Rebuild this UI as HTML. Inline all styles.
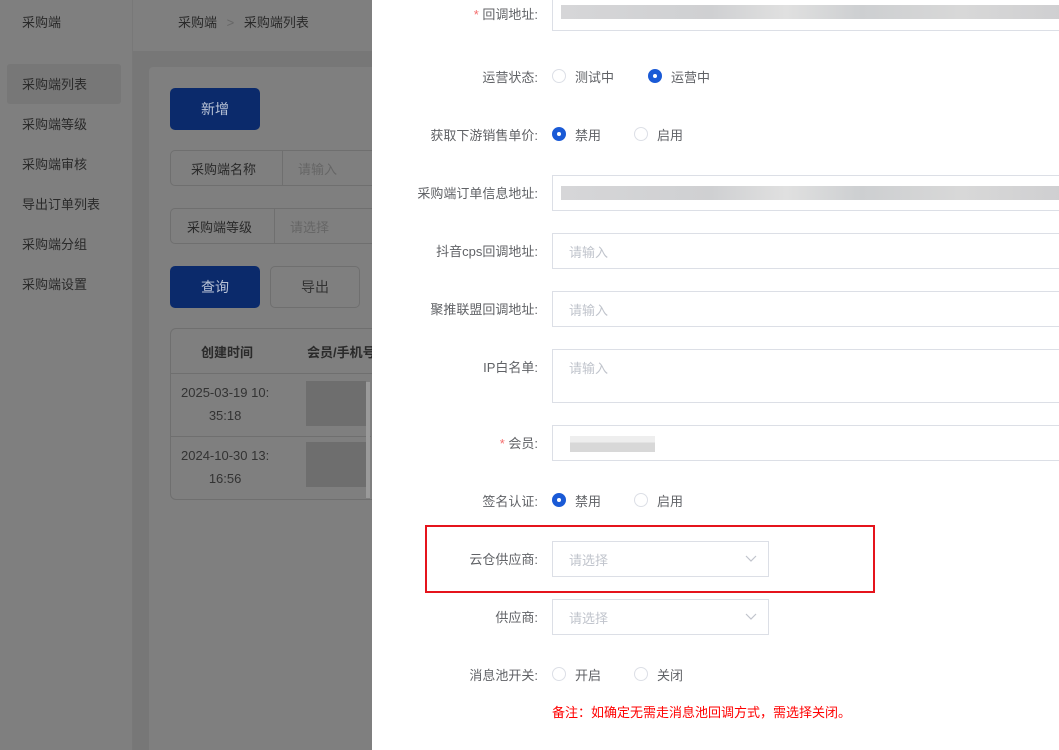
<!DOCTYPE html>
<html><head><meta charset="utf-8"><style>
*{box-sizing:border-box;margin:0;padding:0}
body{width:1059px;height:750px;overflow:hidden;position:relative;font-family:"Liberation Sans","Noto Sans CJK SC",sans-serif;font-size:13px;background:#fff}
.abs{position:absolute}
#left{left:0;top:0;width:372px;height:750px;background:#777;overflow:hidden}
.side{left:0;top:0;width:133px;height:750px;background:#7f7f7f;border-right:1px solid #787878}
.hdr{left:133px;top:0;width:239px;height:52px;background:#7f7f7f;border-bottom:1px solid #777}
.gt{color:#2a2a2a;white-space:nowrap}
.card{left:149px;top:67px;width:240px;height:700px;background:#7f7f7f;border-radius:4px}
.btn{border-radius:5px;text-align:center;line-height:42px;font-size:14px}
.lab{right:521px;text-align:right;color:#606266;font-size:13px;white-space:nowrap}
.inp{left:552px;border:1px solid #dcdfe6;background:#fff;height:36px;width:520px}
.ph{color:#c0c4cc;position:absolute;left:16px;top:8px}
.radio{width:14px;height:14px;border-radius:50%;border:1px solid #dcdfe6;display:inline-block;position:absolute}
.on{background:#1a5ad6;border-color:#1a5ad6}
.on::after{content:"";position:absolute;left:4px;top:4px;width:4px;height:4px;background:#fff;border-radius:50%}
.rt{position:absolute;color:#606266}
.star{color:#f56c6c}
.blur{position:absolute;background:linear-gradient(90deg,#d6d6d8,#cfd0d2 30%,#e0e0e0 45%,#cdcfd1 60%,#d8d8d8 80%,#cfcfd1);}
</style></head><body>
<div id="left" class="abs">
 <div class="abs side"></div>
 <div class="abs hdr"></div>
 <div class="abs gt" style="left:22px;top:12px">采购端</div>
 <div class="abs gt" style="left:178px;top:12px">采购端 <span style="color:#666;margin:0 6px">&gt;</span> 采购端列表</div>
 <div class="abs" style="left:7px;top:64px;width:114px;height:40px;background:#777;border-radius:3px"></div>
 <div class="abs gt" style="left:22px;top:65px;line-height:40px">采购端列表<br>采购端等级<br>采购端审核<br>导出订单列表<br>采购端分组<br>采购端设置</div>
 <div class="abs card"></div>
 <div class="abs btn" style="left:170px;top:88px;width:90px;background:#0b2a6b;color:#b9c3d6">新增</div>
 <div class="abs" style="left:170px;top:150px;width:220px;height:36px;border:1px solid #6f6f6f;border-radius:5px"><div class="abs" style="left:111px;top:0;height:34px;border-left:1px solid #6f6f6f"></div><span class="abs gt" style="left:20px;top:8px">采购端名称</span><span class="abs" style="left:127px;top:8px;color:#666">请输入</span></div>
 <div class="abs" style="left:170px;top:208px;width:220px;height:36px;border:1px solid #6f6f6f;border-radius:5px"><div class="abs" style="left:103px;top:0;height:34px;border-left:1px solid #6f6f6f"></div><span class="abs gt" style="left:16px;top:8px">采购端等级</span><span class="abs" style="left:119px;top:8px;color:#666">请选择</span></div>
 <div class="abs btn" style="left:170px;top:266px;width:90px;background:#0b2a6b;color:#b9c3d6">查询</div>
 <div class="abs btn" style="left:270px;top:266px;width:90px;border:1px solid #6f6f6f;color:#333;line-height:40px">导出</div>
 <div class="abs" style="left:170px;top:328px;width:220px;height:172px;border:1px solid #6f6f6f;border-radius:6px"></div>
 <div class="abs" style="left:171px;top:373px;width:210px;border-top:1px solid #6f6f6f"></div>
 <div class="abs" style="left:171px;top:436px;width:200px;border-top:1px solid #6f6f6f"></div>
 <div class="abs gt" style="left:201px;top:342px;font-weight:bold">创建时间</div>
 <div class="abs gt" style="left:307px;top:342px;font-weight:bold">会员/手机号</div>
 <div class="abs" style="left:181px;top:381px;color:#333;text-align:center;line-height:23px">2025-03-19 10:<br>35:18</div>
 <div class="abs" style="left:181px;top:444px;color:#333;text-align:center;line-height:23px">2024-10-30 13:<br>16:56</div>
 <div class="abs" style="left:306px;top:381px;width:60px;height:45px;background:#6e6e6e"></div>
 <div class="abs" style="left:306px;top:442px;width:60px;height:45px;background:#6e6e6e"></div>
 <div class="abs" style="left:366px;top:382px;width:4px;height:116px;background:#9a9a9a"></div>
</div>

<div class="abs lab" style="top:4px"><span class="star">* </span>回调地址:</div>
<div class="abs inp" style="top:-6px;height:37px"><div class="blur" style="left:8px;top:10px;width:500px;height:14px"></div></div>

<div class="abs lab" style="top:67px">运营状态:</div>
<span class="radio" style="left:552px;top:69px"></span><span class="rt" style="left:575px;top:67px">测试中</span>
<span class="radio on" style="left:648px;top:69px"></span><span class="rt" style="left:671px;top:67px">运营中</span>

<div class="abs lab" style="top:125px">获取下游销售单价:</div>
<span class="radio on" style="left:552px;top:127px"></span><span class="rt" style="left:575px;top:125px">禁用</span>
<span class="radio" style="left:634px;top:127px"></span><span class="rt" style="left:657px;top:125px">启用</span>

<div class="abs lab" style="top:183px">采购端订单信息地址:</div>
<div class="abs inp" style="top:175px"><div class="blur" style="left:8px;top:10px;width:500px;height:14px"></div></div>

<div class="abs lab" style="top:241px">抖音cps回调地址:</div>
<div class="abs inp" style="top:233px"><span class="ph">请输入</span></div>
<div class="abs lab" style="top:299px">聚推联盟回调地址:</div>
<div class="abs inp" style="top:291px"><span class="ph">请输入</span></div>
<div class="abs lab" style="top:357px">IP白名单:</div>
<div class="abs inp" style="top:349px;height:54px"><span class="ph">请输入</span></div>
<div class="abs lab" style="top:433px"><span class="star">* </span>会员:</div>
<div class="abs inp" style="top:425px"><div class="abs" style="left:17px;top:10px;width:85px;height:16px;background:linear-gradient(#eee 40%,#d8d8d8 40%)"></div></div>

<div class="abs lab" style="top:491px">签名认证:</div>
<span class="radio on" style="left:552px;top:493px"></span><span class="rt" style="left:575px;top:491px">禁用</span>
<span class="radio" style="left:634px;top:493px"></span><span class="rt" style="left:657px;top:491px">启用</span>

<div class="abs" style="left:425px;top:525px;width:450px;height:68px;border:2px solid #e5141c"></div>
<div class="abs lab" style="top:549px">云仓供应商:</div>
<div class="abs inp" style="top:541px;width:217px"><span class="ph">请选择</span><svg class="abs" style="left:192px;top:13px" width="12" height="8"><path d="M1 1l5 5 5-5" fill="none" stroke="#c0c4cc" stroke-width="1.2"/></svg></div>
<div class="abs lab" style="top:607px">供应商:</div>
<div class="abs inp" style="top:599px;width:217px"><span class="ph">请选择</span><svg class="abs" style="left:192px;top:13px" width="12" height="8"><path d="M1 1l5 5 5-5" fill="none" stroke="#c0c4cc" stroke-width="1.2"/></svg></div>

<div class="abs lab" style="top:665px">消息池开关:</div>
<span class="radio" style="left:552px;top:667px"></span><span class="rt" style="left:575px;top:665px">开启</span>
<span class="radio" style="left:634px;top:667px"></span><span class="rt" style="left:657px;top:665px">关闭</span>
<div class="abs" style="left:552px;top:702px;color:#f00">备注：如确定无需走消息池回调方式，需选择关闭。</div>
</body></html>
